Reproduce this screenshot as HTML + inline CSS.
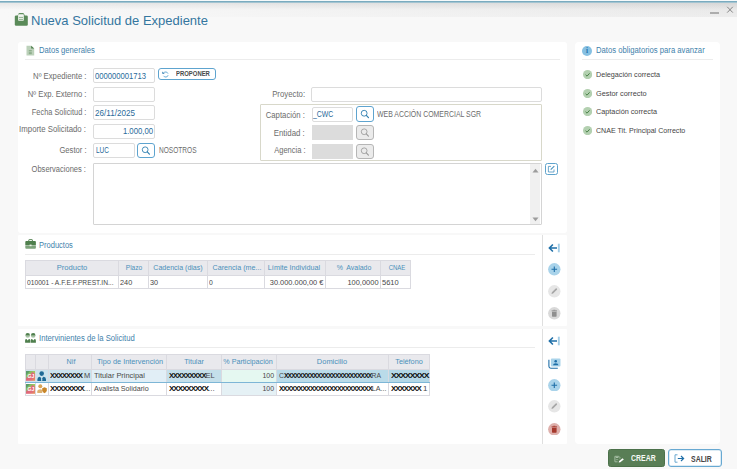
<!DOCTYPE html>
<html lang="es">
<head>
<meta charset="utf-8">
<title>Nueva Solicitud de Expediente</title>
<style>
*{box-sizing:border-box;margin:0;padding:0}
html,body{width:737px;height:472px;overflow:hidden;background:#fff}
body{font-family:"Liberation Sans",sans-serif;font-size:8.3px;color:#555;position:relative}
#win{position:absolute;left:0;top:0;width:737px;height:469px;background:#f8f8f8;overflow:hidden}
#topline{position:absolute;left:0;top:0;width:737px;height:3px;background:linear-gradient(#f6fafb 0,#f6fafb 1px,#7aabbf 1px,#7aabbf 2px,#a3c4d1 2px)}
#strip{position:absolute;left:0;top:3px;width:737px;height:14px;background:linear-gradient(rgba(0,0,0,.065),rgba(0,0,0,0) 7px),linear-gradient(90deg,rgba(248,248,248,1) 0,rgba(248,248,248,.78) 30%,rgba(248,248,248,.4) 65%,rgba(248,248,248,0) 100%),linear-gradient(#e6e6e6,#ededed)}
.abs{position:absolute}
.t{position:absolute;white-space:nowrap;line-height:12px;height:12px}
.panel{position:absolute;background:#fff;border-radius:3px}
.hr{position:absolute;background:#ececec}
.inp{position:absolute;border:1px solid #dcdcdc;border-radius:2px;background:#fff}
.inp.dis{background:#dcdcdc;border-color:#dcdcdc;border-radius:0}
.sb{position:absolute;border:1px solid #5ea4cf;border-radius:3px;background:#fff}
.sb.dis{border-color:#b6b6b6;background:#ebebeb}
b.x{font-weight:bold;color:#111;letter-spacing:-1px}
</style>
</head>
<body>
<div id="win">
<div id="topline"></div><div id="strip"></div>
<div class="abs" style="left:710px;top:12px;width:9px;height:2px;background:#adadad"></div>
<svg class="abs" style="left:726px;top:5.500px" width="8" height="8" viewBox="0 0 8 8"><path d="M1.200.8L6.800 6.600M6.800.8L1.200 6.600" stroke="#7a7a7a" stroke-width="0.900" fill="none"/></svg>
<svg class="abs" style="left:14px;top:12px" width="15" height="15" viewBox="14 12 15 15">
<path d="M17.400 15.800L18.600 13.600Q18.900 13.100 19.500 13.100H22.900Q23.500 13.100 23.800 13.600L25 15.800z" fill="#5f8e5e"/>
<rect x="14.800" y="15.400" width="13" height="10.400" rx="1.300" fill="#5a8a59"/>
<rect x="18.100" y="14.300" width="5.700" height="6.400" rx="0.600" fill="#f2f6f1"/>
<rect x="18.900" y="16.900" width="4.100" height="0.900" fill="#86aa84"/>
<rect x="18.900" y="18.900" width="4.100" height="0.900" fill="#86aa84"/>
</svg>
<div class="t" id="ttl" style="left:31.300px;top:10px;font-size:13.200px;line-height:22px;height:22px;color:#34769f;transform:scaleX(.985);transform-origin:0 50%">Nueva Solicitud de Expediente</div>
<div class="panel" style="left:18px;top:42px;width:549px;height:191px;"></div>
<svg class="abs" style="left:26px;top:45px" width="9" height="11" viewBox="0 0 9 11"><path d="M0.500.7h4.700L8.200 3.600v6.900h-7.700z" fill="#bcd1ba"/><path d="M5.200.7L8.200 3.600H5.200z" fill="#4f7f4d"/><rect x="2.800" y="5.300" width="3" height="0.800" fill="#7ba179"/><rect x="2.800" y="6.800" width="3" height="0.800" fill="#7ba179"/><rect x="2.800" y="8.300" width="3" height="0.800" fill="#7ba179"/></svg>
<div class="t" style="top:44px;font-size:8.3px;color:#4282ab;left:39.0px;transform:scaleX(0.922);transform-origin:0 50%;">Datos generales</div>
<div class="hr" style="left:25px;top:59px;width:535px;height:1px;"></div>
<div class="t" style="top:70px;font-size:8.3px;color:#6c6c6c;right:650.8px;transform:scaleX(0.929);transform-origin:100% 50%;">Nº Expediente :</div>
<div class="t" style="top:88px;font-size:8.3px;color:#6c6c6c;right:650.8px;transform:scaleX(0.924);transform-origin:100% 50%;">Nº Exp. Externo :</div>
<div class="t" style="top:106px;font-size:8.3px;color:#6c6c6c;right:650.8px;transform:scaleX(0.888);transform-origin:100% 50%;">Fecha Solicitud :</div>
<div class="t" style="top:123px;font-size:8.3px;color:#6c6c6c;right:650.8px;transform:scaleX(0.942);transform-origin:100% 50%;">Importe Solicitado :</div>
<div class="t" style="top:144px;font-size:8.3px;color:#6c6c6c;right:650.8px;transform:scaleX(0.918);transform-origin:100% 50%;">Gestor :</div>
<div class="t" style="top:163px;font-size:8.3px;color:#6c6c6c;right:650.8px;transform:scaleX(0.907);transform-origin:100% 50%;">Observaciones :</div>
<div class="inp" style="left:93px;top:68px;width:62px;height:15px;"></div>
<div class="inp" style="left:93px;top:87px;width:62px;height:15px;"></div>
<div class="inp" style="left:93px;top:105px;width:62px;height:15px;"></div>
<div class="inp" style="left:93px;top:124px;width:62px;height:15px;"></div>
<div class="inp" style="left:93px;top:143px;width:41.5px;height:15px;"></div>
<div class="t" style="top:70px;font-size:8.5px;color:#2a6a9a;left:95.2px;transform:scaleX(0.901);transform-origin:0 50%;">000000001713</div>
<div class="t" style="top:107px;font-size:8.5px;color:#2a6a9a;left:95.2px;transform:scaleX(0.952);transform-origin:0 50%;">26/11/2025</div>
<div class="t" style="top:125px;font-size:8.5px;color:#2a6a9a;right:584.0px;transform:scaleX(0.913);transform-origin:100% 50%;">1.000,00</div>
<div class="t" style="top:144px;font-size:8.4px;color:#2a6a9a;left:95.6px;transform:scaleX(0.769);transform-origin:0 50%;">LUC</div>
<div class="sb" style="left:137px;top:143px;width:18px;height:15px;"><svg width="100%" height="100%" viewBox="0 0 17 14" style="display:block"><circle cx="7.600" cy="6.200" r="3.100" fill="none" stroke="#2f7fb0" stroke-width="0.95"/><path d="M9.900 8.500L12.200 10.900" stroke="#2f7fb0" stroke-width="1.25" stroke-linecap="round"/></svg></div>
<div class="t" style="top:144px;font-size:8.4px;color:#6c6c6c;left:158.7px;transform:scaleX(0.784);transform-origin:0 50%;">NOSOTROS</div>
<div class="abs" style="left:158px;top:68px;width:58px;height:12px;border:1px solid #5ea4cf;border-radius:3px;background:#fff"></div>
<svg class="abs" style="left:161.500px;top:71px" width="7" height="6.500" viewBox="0 0 7 6.500"><path d="M1.700 1.900A2.500 2.500 0 0 1 6 2.600M6.100 4.200A2.500 2.500 0 0 1 1.500 4.800" fill="none" stroke="#5ea4cf" stroke-width="0.900"/><path d="M0.300.4V2.800H2.700z" fill="#2474ac"/></svg>
<div class="t" style="top:68px;font-size:7.2px;color:#4a4a4a;font-weight:bold;left:176.2px;transform:scaleX(0.824);transform-origin:0 50%;">PROPONER</div>
<div class="t" style="top:88px;font-size:8.3px;color:#6c6c6c;right:432.3px;transform:scaleX(0.938);transform-origin:100% 50%;">Proyecto:</div>
<div class="inp" style="left:311px;top:87px;width:231px;height:15px;"></div>
<div class="abs" style="left:260px;top:104px;width:282px;height:57px;border:1px solid #d8d8ca;border-radius:1px"></div>
<div class="t" style="top:109px;font-size:8.3px;color:#6c6c6c;right:431.9px;transform:scaleX(0.936);transform-origin:100% 50%;">Captación :</div>
<div class="t" style="top:127px;font-size:8.3px;color:#6c6c6c;right:431.9px;transform:scaleX(0.946);transform-origin:100% 50%;">Entidad :</div>
<div class="t" style="top:144px;font-size:8.3px;color:#6c6c6c;right:431.9px;transform:scaleX(0.908);transform-origin:100% 50%;">Agencia :</div>
<div class="inp" style="left:312px;top:107px;width:41px;height:15px;"></div>
<div class="inp dis" style="left:312px;top:125px;width:41px;height:15px;"></div>
<div class="inp dis" style="left:312px;top:144px;width:41px;height:15px;"></div>
<div class="t" style="top:108px;font-size:8.4px;color:#2a6a9a;left:313.3px;transform:scaleX(0.823);transform-origin:0 50%;">_CWC</div>
<div class="sb" style="left:356px;top:106px;width:18px;height:16px;"><svg width="100%" height="100%" viewBox="0 0 17 14" style="display:block"><circle cx="7.600" cy="6.200" r="3.100" fill="none" stroke="#2f7fb0" stroke-width="0.95"/><path d="M9.900 8.500L12.200 10.900" stroke="#2f7fb0" stroke-width="1.25" stroke-linecap="round"/></svg></div>
<div class="sb dis" style="left:356px;top:125px;width:18px;height:15px;"><svg width="100%" height="100%" viewBox="0 0 17 14" style="display:block"><circle cx="7.600" cy="6.200" r="3.100" fill="none" stroke="#9a9a9a" stroke-width="0.9"/><path d="M9.900 8.500L12.200 10.900" stroke="#9a9a9a" stroke-width="1.2" stroke-linecap="round"/></svg></div>
<div class="sb dis" style="left:356px;top:144px;width:18px;height:15px;"><svg width="100%" height="100%" viewBox="0 0 17 14" style="display:block"><circle cx="7.600" cy="6.200" r="3.100" fill="none" stroke="#9a9a9a" stroke-width="0.9"/><path d="M9.900 8.500L12.200 10.900" stroke="#9a9a9a" stroke-width="1.2" stroke-linecap="round"/></svg></div>
<div class="t" style="top:108px;font-size:8.4px;color:#6c6c6c;left:377.0px;transform:scaleX(0.827);transform-origin:0 50%;">WEB ACCIÓN COMERCIAL SGR</div>
<div class="abs" style="left:93px;top:163px;width:449px;height:62px;border:1px solid #d4d4d4;border-radius:1px;background:#fff"></div>
<div class="abs" style="left:530px;top:164px;width:10px;height:60px;background:#f0f0f0"></div>
<svg class="abs" style="left:532px;top:167.500px" width="7" height="5" viewBox="0 0 7 5"><path d="M0.500 4.500L3.500.7L6.500 4.500z" fill="#9c9c9c"/></svg>
<svg class="abs" style="left:532px;top:216.500px" width="7" height="5" viewBox="0 0 7 5"><path d="M0.500.5L3.500 4.300L6.500.5z" fill="#9c9c9c"/></svg>
<div class="abs" style="left:545px;top:163px;width:13px;height:12px;border:1px solid #5fa3cc;border-radius:2.500px;background:#fff"></div>
<svg class="abs" style="left:547px;top:165px" width="9" height="8" viewBox="0 0 9 8"><path d="M4 1.400H1.400V7H7V4.500" fill="none" stroke="#4a93c0" stroke-width="0.800"/><path d="M3.700 4.700L7.300 1.100" stroke="#4a93c0" stroke-width="1.100"/></svg>
<div class="panel" style="left:18px;top:235px;width:549px;height:91px;border-radius:1px"></div>
<div class="abs" style="left:542px;top:235px;width:1px;height:91px;background:#dfdfdf"></div>
<svg class="abs" style="left:24.800px;top:239px" width="11.200" height="10" viewBox="0 0 11.200 10"><path d="M3.800 2.300V1Q3.800.6 4.200.6H7Q7.400.6 7.400 1V2.300" fill="none" stroke="#4f7f4d" stroke-width="0.900"/><path d="M0.300 6.400V3Q0.300 2.100 1.200 2.100H10Q10.900 2.100 10.900 3V6.400z" fill="#4f7f4d"/><path d="M0.300 6.900H10.900V8.800Q10.900 9.700 10 9.700H1.200Q0.300 9.700.3 8.800z" fill="#7da37b"/><rect x="4.600" y="5.600" width="2" height="1.600" fill="#e8f0e7"/></svg>
<div class="t" style="top:239px;font-size:8.3px;color:#4282ab;left:39.0px;transform:scaleX(0.907);transform-origin:0 50%;">Productos</div>
<div class="hr" style="left:25px;top:254px;width:510px;height:1px;"></div>
<div class="abs" style="left:25px;top:260px;width:385px;height:15px;background:#e9e9ed"></div>
<div class="abs" style="left:25px;top:275px;width:385px;height:13px;background:#fff"></div>
<div class="abs" style="left:25px;top:260px;width:1px;height:29px;background:#dadae0"></div>
<div class="abs" style="left:118px;top:260px;width:1px;height:29px;background:#dadae0"></div>
<div class="abs" style="left:148px;top:260px;width:1px;height:29px;background:#dadae0"></div>
<div class="abs" style="left:207px;top:260px;width:1px;height:29px;background:#dadae0"></div>
<div class="abs" style="left:264px;top:260px;width:1px;height:29px;background:#dadae0"></div>
<div class="abs" style="left:325px;top:260px;width:1px;height:29px;background:#dadae0"></div>
<div class="abs" style="left:380px;top:260px;width:1px;height:29px;background:#dadae0"></div>
<div class="abs" style="left:410px;top:260px;width:1px;height:29px;background:#dadae0"></div>
<div class="abs" style="left:25px;top:260px;width:386px;height:1px;background:#dadae0"></div>
<div class="abs" style="left:25px;top:275px;width:386px;height:1px;background:#dadae0"></div>
<div class="abs" style="left:25px;top:288px;width:386px;height:1px;background:#dadae0"></div>
<div class="t" style="top:262px;font-size:8.1px;color:#4a90ba;left:71.8px;transform:translateX(-50%) scaleX(0.941);transform-origin:50% 50%;">Producto</div>
<div class="t" style="top:262px;font-size:8.1px;color:#4a90ba;left:133.7px;transform:translateX(-50%) scaleX(0.815);transform-origin:50% 50%;">Plazo</div>
<div class="t" style="top:262px;font-size:8.1px;color:#4a90ba;left:178.4px;transform:translateX(-50%) scaleX(0.870);transform-origin:50% 50%;">Cadencia (dias)</div>
<div class="t" style="top:262px;font-size:8.1px;color:#4a90ba;left:237.1px;transform:translateX(-50%) scaleX(0.882);transform-origin:50% 50%;">Carencia (me...</div>
<div class="t" style="top:262px;font-size:8.1px;color:#4a90ba;left:294.4px;transform:translateX(-50%) scaleX(0.894);transform-origin:50% 50%;">Límite Individual</div>
<div class="t" style="top:262px;font-size:8.1px;color:#4a90ba;left:353.5px;transform:translateX(-50%) scaleX(0.857);transform-origin:50% 50%;">%&nbsp; Avalado</div>
<div class="t" style="top:262px;font-size:8.1px;color:#4a90ba;left:397.0px;transform:translateX(-50%) scaleX(0.742);transform-origin:50% 50%;">CNAE</div>
<div class="t" style="top:277px;font-size:7.8px;color:#484848;left:26.8px;transform:scaleX(0.857);transform-origin:0 50%;">010001 - A.F.E.F.PREST.IN...</div>
<div class="t" style="top:277px;font-size:7.8px;color:#484848;left:119.8px;transform:scaleX(0.937);transform-origin:0 50%;">240</div>
<div class="t" style="top:277px;font-size:7.8px;color:#484848;left:149.8px;transform:scaleX(0.932);transform-origin:0 50%;">30</div>
<div class="t" style="top:277px;font-size:7.8px;color:#484848;left:209.2px;transform:scaleX(0.875);transform-origin:0 50%;">0</div>
<div class="t" style="top:277px;font-size:7.8px;color:#484848;right:413.7px;transform:scaleX(0.951);transform-origin:100% 50%;">30.000.000,00 €</div>
<div class="t" style="top:277px;font-size:7.8px;color:#484848;right:358.1px;transform:scaleX(0.956);transform-origin:100% 50%;">100,0000</div>
<div class="t" style="top:277px;font-size:7.8px;color:#484848;left:381.5px;transform:scaleX(0.962);transform-origin:0 50%;">5610</div>
<div class="panel" style="left:18px;top:329px;width:549px;height:115px;border-radius:1px"></div>
<div class="abs" style="left:542px;top:329px;width:1px;height:115px;background:#dfdfdf"></div>
<svg class="abs" style="left:24.800px;top:333px" width="11.400" height="10" viewBox="24.800 333 11.400 10"><defs><linearGradient id="hd" x1="0" y1="0" x2="0" y2="1"><stop offset="0.350" stop-color="#4f7f4d"/><stop offset="0.600" stop-color="#a6c2a4"/></linearGradient></defs><circle cx="27.500" cy="335.400" r="2.300" fill="url(#hd)"/><circle cx="33" cy="335.400" r="2.300" fill="url(#hd)"/><path d="M24.900 342.800V340.400Q24.900 339 26.300 339L27.500 340.600L28.700 339Q30.100 339 30.100 340.400V342.800z" fill="#4f7f4d"/><path d="M30.500 342.800V340.400Q30.500 339 31.900 339L33.100 340.600L34.300 339Q35.700 339 35.700 340.400V342.800z" fill="#4f7f4d"/></svg>
<div class="t" style="top:332px;font-size:8.3px;color:#4282ab;left:39.0px;transform:scaleX(0.927);transform-origin:0 50%;">Intervinientes de la Solicitud</div>
<div class="hr" style="left:25px;top:347px;width:510px;height:1px;"></div>
<div class="abs" style="left:25px;top:354px;width:404px;height:15px;background:#e9e9ed"></div>
<div class="abs" style="left:25px;top:369px;width:404px;height:13px;background:#cbe3ee"></div>
<div class="abs" style="left:25px;top:382px;width:404px;height:13px;background:#fff"></div>
<div class="abs" style="left:91px;top:369px;width:75px;height:13px;background:#e1eef6"></div>
<div class="abs" style="left:166px;top:369px;width:55px;height:13px;background:#c4dfea"></div>
<div class="abs" style="left:221px;top:369px;width:55px;height:13px;background:#e5f8f1"></div>
<div class="abs" style="left:276px;top:369px;width:112px;height:13px;background:#badbe9"></div>
<div class="abs" style="left:388px;top:369px;width:41px;height:13px;background:#b3d7e6"></div>
<div class="abs" style="left:221px;top:382px;width:55px;height:13px;background:#e5f1f5"></div>
<div class="abs" style="left:25px;top:354px;width:1px;height:42px;background:#dadae0"></div>
<div class="abs" style="left:35px;top:354px;width:1px;height:42px;background:#dadae0"></div>
<div class="abs" style="left:48px;top:354px;width:1px;height:42px;background:#dadae0"></div>
<div class="abs" style="left:91px;top:354px;width:1px;height:42px;background:#dadae0"></div>
<div class="abs" style="left:166px;top:354px;width:1px;height:42px;background:#dadae0"></div>
<div class="abs" style="left:221px;top:354px;width:1px;height:42px;background:#dadae0"></div>
<div class="abs" style="left:276px;top:354px;width:1px;height:42px;background:#dadae0"></div>
<div class="abs" style="left:388px;top:354px;width:1px;height:42px;background:#dadae0"></div>
<div class="abs" style="left:429px;top:354px;width:1px;height:42px;background:#dadae0"></div>
<div class="abs" style="left:25px;top:354px;width:405px;height:1px;background:#dadae0"></div>
<div class="abs" style="left:25px;top:369px;width:405px;height:1px;background:#dadae0"></div>
<div class="abs" style="left:25px;top:382px;width:405px;height:1px;background:#dadae0"></div>
<div class="abs" style="left:25px;top:395px;width:405px;height:1px;background:#dadae0"></div>
<div class="t" style="top:356px;font-size:8.1px;color:#4a90ba;left:70.5px;transform:translateX(-50%) scaleX(0.888);transform-origin:50% 50%;">Nif</div>
<div class="t" style="top:356px;font-size:8.1px;color:#4a90ba;left:129.9px;transform:translateX(-50%) scaleX(0.906);transform-origin:50% 50%;">Tipo de Intervención</div>
<div class="t" style="top:356px;font-size:8.1px;color:#4a90ba;left:193.9px;transform:translateX(-50%) scaleX(0.883);transform-origin:50% 50%;">Titular</div>
<div class="t" style="top:356px;font-size:8.1px;color:#4a90ba;left:248.2px;transform:translateX(-50%) scaleX(0.887);transform-origin:50% 50%;">% Participación</div>
<div class="t" style="top:356px;font-size:8.1px;color:#4a90ba;left:331.8px;transform:translateX(-50%) scaleX(0.923);transform-origin:50% 50%;">Domicilio</div>
<div class="t" style="top:356px;font-size:8.1px;color:#4a90ba;left:408.9px;transform:translateX(-50%) scaleX(0.898);transform-origin:50% 50%;">Teléfono</div>
<div class="t" style="top:370px;font-size:7.8px;color:#484848;left:50.1px;transform:scaleX(0.953);transform-origin:0 50%;"><b class="x">XXXXXXXX</b> M</div>
<div class="t" style="top:370px;font-size:7.8px;color:#484848;left:93.5px;transform:scaleX(0.952);transform-origin:0 50%;">Titular Principal</div>
<div class="t" style="top:370px;font-size:7.8px;color:#484848;left:168.5px;transform:scaleX(0.965);transform-origin:0 50%;"><b class="x">XXXXXXXXX</b>EL</div>
<div class="t" style="top:370px;font-size:7.8px;color:#484848;right:463.1px;transform:scaleX(0.891);transform-origin:100% 50%;">100</div>
<div class="t" style="top:370px;font-size:7.8px;color:#484848;left:278.5px;transform:scaleX(0.869);transform-origin:0 50%;">C<b class="x">XXXXXXXXXXXXXXXXXXXXXXXX</b>RA</div>
<div class="t" style="top:370px;font-size:7.8px;color:#484848;left:390.5px;transform:scaleX(1.110);transform-origin:0 50%;"><b class="x">XXXXXXXX</b></div>
<div class="t" style="top:383px;font-size:7.8px;color:#484848;left:50.1px;transform:scaleX(1.005);transform-origin:0 50%;"><b class="x">XXXXXXXX</b>...</div>
<div class="t" style="top:383px;font-size:7.8px;color:#484848;left:93.5px;transform:scaleX(0.915);transform-origin:0 50%;">Avalista Solidario</div>
<div class="t" style="top:383px;font-size:7.8px;color:#484848;left:168.5px;transform:scaleX(1.031);transform-origin:0 50%;"><b class="x">XXXXXXXXX</b>...</div>
<div class="t" style="top:383px;font-size:7.8px;color:#484848;right:463.1px;transform:scaleX(0.891);transform-origin:100% 50%;">100</div>
<div class="t" style="top:383px;font-size:7.8px;color:#484848;left:278.5px;transform:scaleX(0.920);transform-origin:0 50%;"><b class="x">XXXXXXXXXXXXXXXXXXXXXXXX</b>LA...</div>
<div class="t" style="top:383px;font-size:7.8px;color:#484848;left:390.5px;transform:scaleX(1.016);transform-origin:0 50%;"><b class="x">XXXXXXX</b> 1</div>
<div class="abs" style="left:25px;top:382px;width:405px;height:1px;background:#7db6d6"></div>
<svg class="abs" style="left:25.700px;top:371px" width="9.800" height="9.800" viewBox="0 0 10 10"><defs><linearGradient id="gg371" x1="0" y1="0" x2="1" y2="1"><stop offset="0" stop-color="#5fa267"/><stop offset="0.320" stop-color="#8cc063"/><stop offset="0.450" stop-color="#e0667a"/><stop offset="0.700" stop-color="#e2707a"/><stop offset="1" stop-color="#eaa04e"/></linearGradient></defs><rect width="10" height="10" fill="url(#gg371)"/><path d="M0 0H4L0 4z" fill="#5a9c6a"/><path d="M10 0V4L6 0z" fill="#9ccb5f"/><text x="5.100" y="7" font-family="Liberation Sans,sans-serif" font-size="5.200" font-weight="bold" fill="#fff" text-anchor="middle">GJ</text></svg>
<svg class="abs" style="left:25.700px;top:384px" width="9.800" height="9.800" viewBox="0 0 10 10"><defs><linearGradient id="gg384" x1="0" y1="0" x2="1" y2="1"><stop offset="0" stop-color="#5fa267"/><stop offset="0.320" stop-color="#8cc063"/><stop offset="0.450" stop-color="#e0667a"/><stop offset="0.700" stop-color="#e2707a"/><stop offset="1" stop-color="#eaa04e"/></linearGradient></defs><rect width="10" height="10" fill="url(#gg384)"/><path d="M0 0H4L0 4z" fill="#5a9c6a"/><path d="M10 0V4L6 0z" fill="#9ccb5f"/><text x="5.100" y="7" font-family="Liberation Sans,sans-serif" font-size="5.200" font-weight="bold" fill="#fff" text-anchor="middle">GJ</text></svg>
<svg class="abs" style="left:37px;top:370.600px" width="9.500" height="10.200" viewBox="0 0 9.500 10.200"><circle cx="4.700" cy="2.600" r="2.300" fill="#1f6a96"/><path d="M0.400 10.200V8.200Q0.400 6 2.800 5.800L4.700 7.600L6.600 5.800Q9 6 9 8.200V10.200z" fill="#1f6a96"/><path d="M4.300 6.400H5.100L5.400 9.400L4.700 10L4 9.400z" fill="#cfe4ef"/></svg>
<svg class="abs" style="left:37px;top:384px" width="10" height="9.500" viewBox="0 0 10 9.500"><circle cx="3.300" cy="2.300" r="2" fill="#d9a559"/><path d="M0.300 9V7.600Q0.300 5.400 3.300 5.300Q4.600 5.300 5.200 5.900V9z" fill="#dcb070"/><path d="M7.500 3.300L9.800 4.200V6.300Q9.800 8.200 7.500 9.200Q5.200 8.200 5.200 6.300V4.200z" fill="#c8862a"/></svg>
<div class="panel" style="left:575px;top:42px;width:145px;height:402px;border-radius:4px"></div>
<div class="abs" style="left:582px;top:45.5px;width:10.2px;height:10.2px;background:#86c0e2;border-radius:50%"></div>
<div class="t" style="top:45px;font-size:7.4px;color:#2474ac;font-weight:bold;font-family:'Liberation Serif',serif;left:587.1px;transform:translateX(-50%) scaleX(1.000);transform-origin:50% 50%;">i</div>
<div class="t" style="top:44px;font-size:8.3px;color:#4282ab;left:596.0px;transform:scaleX(0.928);transform-origin:0 50%;">Datos obligatorios para avanzar</div>
<div class="hr" style="left:582px;top:59px;width:131px;height:1px;"></div>
<svg class="abs" style="left:583.200px;top:70.0px" width="9.200" height="9.200" viewBox="0 0 10 10"><circle cx="5" cy="5" r="5" fill="#b3d0b0"/><path d="M2.800 5.200L4.400 6.700L7.200 3.600" fill="none" stroke="#3f7a3c" stroke-width="1"/></svg>
<div class="t" style="top:69px;font-size:8px;color:#454545;left:596.0px;transform:scaleX(0.901);transform-origin:0 50%;">Delegación correcta</div>
<svg class="abs" style="left:583.200px;top:88.6px" width="9.200" height="9.200" viewBox="0 0 10 10"><circle cx="5" cy="5" r="5" fill="#b3d0b0"/><path d="M2.800 5.200L4.400 6.700L7.200 3.600" fill="none" stroke="#3f7a3c" stroke-width="1"/></svg>
<div class="t" style="top:88px;font-size:8px;color:#454545;left:596.0px;transform:scaleX(0.918);transform-origin:0 50%;">Gestor correcto</div>
<svg class="abs" style="left:583.200px;top:107.1px" width="9.200" height="9.200" viewBox="0 0 10 10"><circle cx="5" cy="5" r="5" fill="#b3d0b0"/><path d="M2.800 5.200L4.400 6.700L7.200 3.600" fill="none" stroke="#3f7a3c" stroke-width="1"/></svg>
<div class="t" style="top:106px;font-size:8px;color:#454545;left:596.0px;transform:scaleX(0.908);transform-origin:0 50%;">Captación correcta</div>
<svg class="abs" style="left:583.200px;top:125.5px" width="9.200" height="9.200" viewBox="0 0 10 10"><circle cx="5" cy="5" r="5" fill="#b3d0b0"/><path d="M2.800 5.200L4.400 6.700L7.200 3.600" fill="none" stroke="#3f7a3c" stroke-width="1"/></svg>
<div class="t" style="top:125px;font-size:8px;color:#454545;left:596.0px;transform:scaleX(0.885);transform-origin:0 50%;">CNAE Tit. Principal Correcto</div>
<svg class="abs" style="left:548px;top:242.5px" width="13" height="10" viewBox="0 0 13 10"><path d="M9 5H1.800M4.900 1.500L1.400 5L4.900 8.500" fill="none" stroke="#1f6fa8" stroke-width="1.600"/><path d="M10.800.7V9.300" stroke="#a3cde6" stroke-width="1.900"/></svg>
<svg class="abs" style="left:548.100px;top:263.3px" width="12.600" height="12.600" viewBox="-0.300 -0.300 12.600 12.600"><circle cx="6" cy="6" r="6.200" fill="#a9d3ea"/><path d="M6 3.200V8.800M3.200 6H8.800" stroke="#1f6fa8" stroke-width="1.100"/></svg>
<svg class="abs" style="left:548.100px;top:285.2px" width="12.600" height="12.600" viewBox="-0.300 -0.300 12.600 12.600"><circle cx="6" cy="6" r="6.200" fill="#e6e6e6"/><path d="M3.200 8.800L3.600 7L7.400 3.200Q7.900 2.700 8.500 3.300Q9.100 3.900 8.600 4.400L4.800 8.200z" fill="#a6a6a6"/></svg>
<svg class="abs" style="left:548.100px;top:307.3px" width="12.600" height="12.600" viewBox="-0.300 -0.300 12.600 12.600"><circle cx="6" cy="6" r="6.200" fill="#d9d9d9"/><path d="M3.700 4.400H8.300V8.800Q8.300 9.400 7.700 9.400H4.300Q3.700 9.400 3.700 8.800z" fill="#8f8f8f"/><rect x="3.300" y="3.100" width="5.400" height="0.900" fill="#8f8f8f"/><rect x="5" y="2.500" width="2" height="0.800" fill="#8f8f8f"/></svg>
<svg class="abs" style="left:548px;top:335.7px" width="13" height="10" viewBox="0 0 13 10"><path d="M9 5H1.800M4.900 1.500L1.400 5L4.900 8.500" fill="none" stroke="#1f6fa8" stroke-width="1.600"/><path d="M10.800.7V9.300" stroke="#a3cde6" stroke-width="1.900"/></svg>
<svg class="abs" style="left:548px;top:357.500px" width="13" height="11" viewBox="0 0 13 11"><path d="M0.900 1.800V8.300Q0.900 10.200 2.800 10.200H9.800" fill="none" stroke="#1f6fa8" stroke-width="1.100"/><rect x="2.900" y="0.400" width="9.600" height="8.200" rx="1" fill="#a9d3ea"/><circle cx="7.700" cy="3.300" r="1.300" fill="#1f6fa8"/><path d="M5 7.200Q5 5.300 7.700 5.300Q10.400 5.300 10.400 7.200z" fill="#1f6fa8"/></svg>
<svg class="abs" style="left:548.100px;top:378.7px" width="12.600" height="12.600" viewBox="-0.300 -0.300 12.600 12.600"><circle cx="6" cy="6" r="6.200" fill="#a9d3ea"/><path d="M6 3.200V8.800M3.200 6H8.800" stroke="#1f6fa8" stroke-width="1.100"/></svg>
<svg class="abs" style="left:548.100px;top:400.4px" width="12.600" height="12.600" viewBox="-0.300 -0.300 12.600 12.600"><circle cx="6" cy="6" r="6.200" fill="#e6e6e6"/><path d="M3.200 8.800L3.600 7L7.400 3.200Q7.900 2.700 8.500 3.300Q9.100 3.900 8.600 4.400L4.800 8.200z" fill="#a6a6a6"/></svg>
<svg class="abs" style="left:548.100px;top:422.6px" width="12.600" height="12.600" viewBox="-0.300 -0.300 12.600 12.600"><circle cx="6" cy="6" r="6.200" fill="#deb0ac"/><path d="M3.700 4.400H8.300V8.800Q8.300 9.400 7.700 9.400H4.300Q3.700 9.400 3.700 8.800z" fill="#a5382c"/><rect x="3.300" y="3.100" width="5.400" height="0.900" fill="#a5382c"/><rect x="5" y="2.500" width="2" height="0.800" fill="#a5382c"/></svg>
<div class="abs" style="left:608px;top:449px;width:57px;height:18px;background:#597e56;border-radius:2.500px;border:1px solid #4c714a"></div>
<svg class="abs" style="left:614px;top:454.500px" width="11" height="8" viewBox="0 0 11 8"><path d="M0.900 1.300H4.800L5.900 2.400V3.600M0.900 1.300V6.800H3.600" fill="none" stroke="#a9c1a7" stroke-width="0.900"/><rect x="1.800" y="1.800" width="2.600" height="1.200" fill="#a9c1a7"/><rect x="1.800" y="4.300" width="2.400" height="0.800" fill="#9ab498"/><path d="M4.700 7.600L5.100 6.100L8.600 3.300L9.800 4.600L6.300 7.300z" fill="#fff"/></svg>
<div class="t" style="top:453px;font-size:8.2px;color:#f6f9f5;font-weight:bold;left:630.5px;transform:scaleX(0.848);transform-origin:0 50%;">CREAR</div>
<div class="abs" style="left:668px;top:449px;width:53.5px;height:18px;background:#fff;border:1px solid #68a9d2;border-radius:3px;box-shadow:inset 0 0 0 0.500px #b9d8ea"></div>
<svg class="abs" style="left:673.500px;top:454px" width="11" height="9" viewBox="0 0 11 9"><path d="M3.500.8H1V8.200H3.500" fill="none" stroke="#6aa8d0" stroke-width="1"/><path d="M3.800 4.500H9.500M7 2L9.600 4.500L7 7" fill="none" stroke="#1f6fa8" stroke-width="1.200"/></svg>
<div class="t" style="top:454px;font-size:8.2px;color:#444;font-weight:bold;left:691.2px;transform:scaleX(0.847);transform-origin:0 50%;">SALIR</div>
</div>
</body>
</html>
